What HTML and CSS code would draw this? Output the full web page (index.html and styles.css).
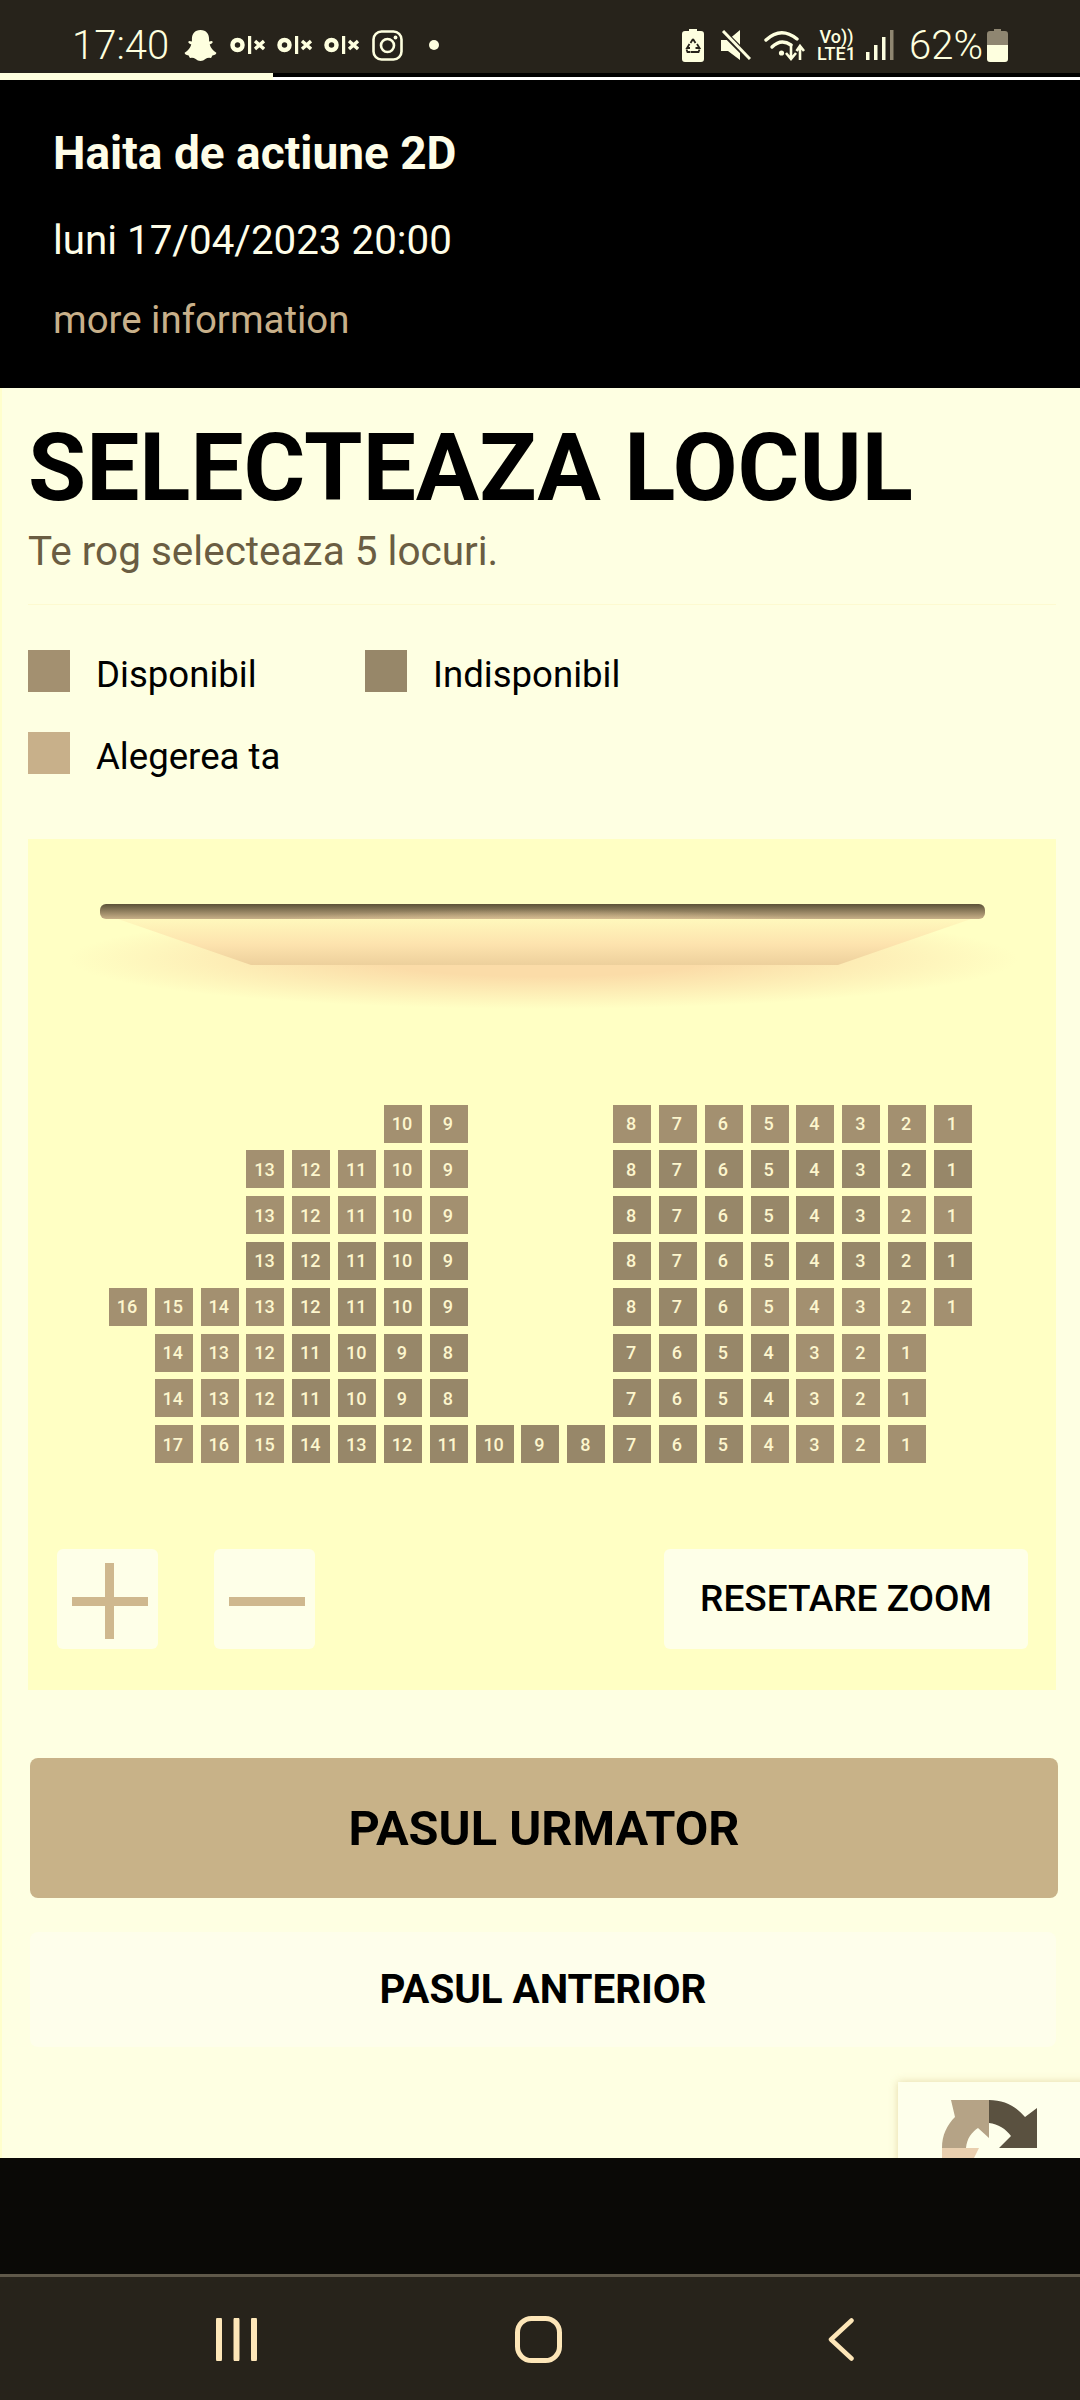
FILE: index.html
```html
<!DOCTYPE html>
<html lang="ro">
  <head>
    <meta charset="UTF-8" />
    <title>Selecteaza locul</title>
    <link rel="stylesheet" href="styles.css">
  </head>
  <body>
    <div class="status">
      <span class="time">17:40</span>
      <svg class="ic-snap" viewBox="0 0 100 100"><path d="M50 3C68 3 76 16 76 30L76 38 84 36Q90 38 84 44L78 47Q82 62 98 72 98 78 86 80L82 88Q72 86 66 90 58 97 50 97 42 97 34 90 28 86 18 88L14 80Q2 78 2 72 18 62 22 47L16 44Q10 38 16 36L24 38 24 30C24 16 32 3 50 3Z"/></svg>
      <svg class="ic-olx" viewBox="0 0 35 18"><circle cx="7.5" cy="9" r="5" fill="none" stroke="#feffdf" stroke-width="4.5"/><rect x="18" width="3.2" height="18"/><path d="M25 5l9 8M34 5l-9 8" stroke="#feffdf" stroke-width="3.4"/></svg>
      <svg class="ic-olx" viewBox="0 0 35 18"><circle cx="7.5" cy="9" r="5" fill="none" stroke="#feffdf" stroke-width="4.5"/><rect x="18" width="3.2" height="18"/><path d="M25 5l9 8M34 5l-9 8" stroke="#feffdf" stroke-width="3.4"/></svg>
      <svg class="ic-olx" viewBox="0 0 35 18"><circle cx="7.5" cy="9" r="5" fill="none" stroke="#feffdf" stroke-width="4.5"/><rect x="18" width="3.2" height="18"/><path d="M25 5l9 8M34 5l-9 8" stroke="#feffdf" stroke-width="3.4"/></svg>
      <svg class="ic-insta" viewBox="0 0 31 31"><rect x="1.5" y="1.5" width="28" height="28" rx="8" fill="none" stroke="#feffdf" stroke-width="2.6"/><circle cx="15.5" cy="15.5" r="6.5" fill="none" stroke="#feffdf" stroke-width="2.6"/><circle cx="23.5" cy="7.5" r="1.9"/></svg>
      <i class="dot"></i>
      <span class="status-space"></span>
      <svg class="ic-saver" viewBox="0 0 22 33"><path d="M7 0h8v2h4q3 0 3 3v25q0 3-3 3H3q-3 0-3-3V5q0-3 3-3h4z"/><path d="M11 10l-2.500 4M8 19H5l2.500-4M11 10l2.500 4M15 15l2.500 4h-4M8.500 23H5.500L4.500 20.500M13 23h3.500l1-2.500M9 23h4" fill="none" stroke="#27231b" stroke-width="1.8"/></svg>
      <svg class="ic-mute" viewBox="0 0 30 30"><path d="M0 10h7L19 0v30L7 21H0z"/><path d="M0 0l30 30" stroke="#27231b" stroke-width="6"/><path d="M2 1l27 28" stroke="#feffdf" stroke-width="3"/></svg>
      <svg class="ic-wifi" viewBox="0 0 42 33"><g fill="none" stroke="#feffdf" stroke-width="3.400" stroke-linecap="round"><path d="M2 11Q17-3 33 10"/><path d="M8 18Q17 9 27 16"/></g><circle cx="17.500" cy="24" r="2.600"/><path d="M27 15v14M22 24l5 6 5-6M36 31V18M32.500 22l3.500-5 4 5" fill="none" stroke="#feffdf" stroke-width="2.600"/></svg>
      <span class="volte"><b>Vo))</b><b>LTE1</b></span>
      <svg class="ic-signal" viewBox="0 0 28 30"><rect y="22" width="3.500" height="8"/><rect x="8" y="15" width="3.500" height="15"/><rect x="16" y="7" width="3.500" height="23"/><rect x="24" width="3.500" height="30" fill="#8f8671"/></svg>
      <span class="pct">62%</span>
      <svg class="ic-batt" viewBox="0 0 21 33"><path d="M7 0h7v2h4q3 0 3 3v11H0V5q0-3 3-3h4z" fill="#8f8671"/><path d="M0 16h21v14q0 3-3 3H3q-3 0-3-3z"/></svg>
    </div>
    <div class="tabs">
      <i class="tab on"></i><i class="tab"></i><i class="tab"></i><i class="tab"></i>
    </div>

    <header class="movie">
      <h2>Haita de actiune 2D</h2>
      <p class="date">luni 17/04/2023 20:00</p>
      <a class="more">more information</a>
    </header>

    <main class="page">
      <h1>SELECTEAZA LOCUL</h1>
      <p class="hint">Te rog selecteaza 5 locuri.</p>
      <hr class="rule" />
      <div class="legend">
        <div class="key"><i class="swatch"></i>Disponibil</div>
        <div class="key"><i class="swatch busy"></i>Indisponibil</div>
        <div class="key"><i class="swatch mine"></i>Alegerea ta</div>
      </div>

      <section class="hall">
        <div class="screen-bar"></div>
        <div class="screen-wrap">
          <div class="screen-glow"></div>
          <div class="screen"></div>
        </div>

        <div class="seats">
          <i></i><i></i><i></i><i></i><i></i><i></i>
          <b>10</b><b>9</b>
          <i></i><i></i><i></i>
          <b>8</b><b>7</b><b>6</b><b>5</b><b>4</b><b>3</b><b>2</b><b>1</b>

          <i></i><i></i><i></i>
          <b>13</b><b>12</b><b>11</b><b>10</b><b>9</b>
          <i></i><i></i><i></i>
          <b class="dk">8</b><b class="dk">7</b><b class="dk">6</b><b class="dk">5</b><b class="dk">4</b><b class="dk">3</b><b class="dk">2</b><b class="dk">1</b>

          <i></i><i></i><i></i>
          <b>13</b><b>12</b><b>11</b><b>10</b><b>9</b>
          <i></i><i></i><i></i>
          <b class="dk">8</b><b class="dk">7</b><b class="dk">6</b><b class="dk">5</b><b class="dk">4</b><b class="dk">3</b><b>2</b><b>1</b>

          <i></i><i></i><i></i>
          <b class="dk">13</b><b class="dk">12</b><b class="dk">11</b><b class="dk">10</b><b class="dk">9</b>
          <i></i><i></i><i></i>
          <b class="dk">8</b><b class="dk">7</b><b class="dk">6</b><b class="dk">5</b><b class="dk">4</b><b class="dk">3</b><b class="dk">2</b><b class="dk">1</b>

          <b>16</b><b>15</b><b>14</b><b>13</b><b class="dk">12</b><b class="dk">11</b><b class="dk">10</b><b class="dk">9</b>
          <i></i><i></i><i></i>
          <b class="dk">8</b><b class="dk">7</b><b class="dk">6</b><b>5</b><b>4</b><b>3</b><b>2</b><b>1</b>

          <i></i>
          <b>14</b><b>13</b><b>12</b><b class="dk">11</b><b class="dk">10</b><b class="dk">9</b><b class="dk">8</b>
          <i></i><i></i><i></i>
          <b class="dk">7</b><b class="dk">6</b><b class="dk">5</b><b class="dk">4</b><b>3</b><b>2</b><b>1</b>
          <i></i>

          <i></i>
          <b>14</b><b>13</b><b>12</b><b class="dk">11</b><b class="dk">10</b><b class="dk">9</b><b class="dk">8</b>
          <i></i><i></i><i></i>
          <b class="dk">7</b><b class="dk">6</b><b class="dk">5</b><b class="dk">4</b><b>3</b><b>2</b><b>1</b>
          <i></i>

          <i></i>
          <b>17</b><b>16</b><b>15</b><b class="dk">14</b><b class="dk">13</b><b class="dk">12</b><b class="dk">11</b><b class="dk">10</b><b class="dk">9</b><b class="dk">8</b>
          <b class="dk">7</b><b class="dk">6</b><b class="dk">5</b><b>4</b><b>3</b><b>2</b><b>1</b>
          <i></i>
        </div>

        <div class="zoom">
          <button class="zoom-btn plus"></button>
          <button class="zoom-btn minus"></button>
          <button class="zoom-reset">RESETARE ZOOM</button>
        </div>
      </section>

      <button class="next">PASUL URMATOR</button>
      <button class="prev">PASUL ANTERIOR</button>

      <div class="captcha">
        <svg viewBox="0 0 95 76">
          <path fill="#b5a386" d="M0 48C0 35 5 25 13 17L9 0 47 0 47 38 36 28C30 32 25 38 24 48Z"/>
          <path fill="#5a5140" d="M47 0C62 0 74 6 83 17L95 8 95 48 57 48 69 36C64 29 56 24 47 23Z"/>
          <path fill="#e9cfae" d="M0 48 37 48 30 62 0 62Z"/>
        </svg>
      </div>
    </main>

    <div class="blackout"></div>

    <nav class="nav">
      <svg class="nav-recent" viewBox="0 0 41 43"><path d="M3 2v39M20.500 2v39M38 2v39" fill="none" stroke="#fde6b8" stroke-width="6" stroke-linecap="round"/></svg>
      <svg class="nav-home" viewBox="0 0 47 47"><rect x="2.500" y="2.500" width="42" height="42" rx="14" fill="none" stroke="#fde6b8" stroke-width="5"/></svg>
      <svg class="nav-back" viewBox="0 0 26 43"><path d="M23.500 2.500L3 21.500 23.500 40.500" fill="none" stroke="#fde6b8" stroke-width="4.500" stroke-linecap="round" stroke-linejoin="round"/></svg>
    </nav>
  </body>
</html>
```

FILE: styles.css
```css
* {
  margin: 0;
  padding: 0;
  box-sizing: border-box;
  font-family: "Roboto", sans-serif;
}
body {
  width: 1080px;
  height: 2400px;
  overflow: hidden;
  display: flex;
  flex-direction: column;
  background: #000;
}

/* phone status bar */
.status {
  height: 73px;
  padding: 17px 72px 0 72px;
  background: #27231b;
  color: #feffdf;
  display: flex;
  align-items: center;
}
.status svg {
  fill: #feffdf;
  flex: none;
}
.time {
  width: 96px;
  font-size: 40px;
  font-weight: 300;
}
.ic-snap {
  width: 35px;
  height: 33px;
  margin-left: 15px;
}
.ic-olx {
  width: 35px;
  height: 18px;
  margin-left: 12px;
}
.ic-insta {
  width: 31px;
  height: 31px;
  margin-left: 13px;
}
.dot {
  width: 10px;
  height: 10px;
  border-radius: 50%;
  background: #feffdf;
  margin-left: 26px;
}
.status-space {
  flex: 1;
}
.ic-saver {
  width: 22px;
  height: 33px;
}
.ic-mute {
  width: 30px;
  height: 30px;
  margin-left: 17px;
}
.ic-wifi {
  width: 42px;
  height: 33px;
  margin-left: 13px;
}
.volte {
  display: flex;
  flex-direction: column;
  align-items: center;
  width: 39px;
  margin-left: 11px;
  font-size: 18px;
  line-height: 17px;
}
.volte b {
  font-weight: 500;
}
.ic-signal {
  width: 28px;
  height: 30px;
  margin-left: 10px;
}
.pct {
  width: 72px;
  margin-left: 15px;
  font-size: 40px;
  font-weight: 300;
}
.ic-batt {
  width: 21px;
  height: 33px;
  margin-left: 6px;
}

.tabs {
  height: 7px;
  display: flex;
  gap: 3px;
  background: #000;
  border-bottom: 3px solid #fff;
}
.tab {
  flex: 1;
}
.tab.on {
  flex: none;
  width: 273px;
  height: 7px;
  background: #feffdf;
}

/* movie header */
.movie {
  height: 308px;
  padding: 41px 0 0 53px;
  background: #000;
}
.movie h2 {
  font-size: 46px;
  line-height: 64px;
  font-weight: 700;
  color: #fefde8;
}
.date {
  margin-top: 33px;
  font-size: 40.3px;
  line-height: 46px;
  color: #fefde8;
}
.more {
  display: block;
  margin-top: 33px;
  font-size: 38.4px;
  line-height: 46px;
  color: #c8b08a;
}

/* main page */
.page {
  position: relative;
  height: 1770px;
  padding: 28px 24px 0 26px;
  overflow: hidden;
  background: #feffe2;
  border-left: 2px solid #ffffcc;
}
h1 {
  font-size: 94.5px;
  line-height: 104px;
  font-weight: 700;
  color: #000;
  white-space: nowrap;
}
.hint {
  margin-top: 8px;
  font-size: 40.5px;
  line-height: 46px;
  color: #6a5d42;
}
.rule {
  margin-top: 30px;
  height: 1px;
  border: 0;
  background: #fdfad0;
}
.legend {
  margin-top: 45px;
  display: grid;
  grid-template-columns: 337px 1fr;
  grid-auto-rows: 82px;
}
.key {
  display: flex;
  align-items: flex-start;
  font-size: 36.6px;
  line-height: 50px;
  color: #000;
}
.swatch {
  width: 42px;
  height: 42px;
  margin-right: 26px;
  background: #a39070;
}
.swatch.busy {
  background: #978769;
}
.swatch.mine {
  background: #c8b08a;
}

/* seat map */
.hall {
  margin-top: 25px;
  width: 1028px;
  height: 851px;
  padding: 65px 0 0;
  background: #ffffc4;
}
.screen-bar {
  width: 885px;
  height: 15px;
  margin-left: 72px;
  border-radius: 6px;
  background: linear-gradient(#5c5238, #c8b088);
}
.screen-wrap {
  position: relative;
  height: 46px;
}
.screen {
  position: absolute;
  left: 90px;
  top: 0;
  width: 853px;
  height: 46px;
  clip-path: polygon(0 0, 100% 0, 84.4% 100%, 15.6% 100%);
  background: linear-gradient(#fff8bc, #fde3ae 55%, #edd09c);
}
.screen-glow {
  position: absolute;
  left: 40px;
  top: -10px;
  width: 950px;
  height: 100px;
  background: radial-gradient(closest-side, #fbdca8 35%, rgba(255, 255, 196, 0));
}
.seats {
  margin: 139.5px 0 0 81px;
  display: grid;
  grid-template-columns: repeat(19, 38px);
  grid-auto-rows: 38px;
  gap: 7.83px;
}
.seats b {
  display: flex;
  align-items: center;
  justify-content: center;
  padding-right: 2px;
  background: #a39070;
  color: #fdf6cd;
  font-size: 18px;
  font-weight: 500;
}
.seats b.dk {
  background: #978769;
}
.zoom {
  margin-top: 85.5px;
  padding: 0 28px 0 29px;
  display: flex;
  align-items: center;
}
.zoom button {
  height: 100px;
  border: 0;
  border-radius: 6px;
  background: #feffe8;
}
.zoom-btn {
  position: relative;
  width: 101px;
  margin-right: 56px;
}
.zoom-btn::before {
  content: "";
  position: absolute;
  left: 15px;
  top: 48px;
  width: 76px;
  height: 9px;
  background: #cfb88e;
}
.plus::after {
  content: "";
  position: absolute;
  left: 48px;
  top: 14px;
  width: 9px;
  height: 76px;
  background: #cfb88e;
}
.zoom-reset {
  width: 364px;
  margin-left: auto;
  font-size: 37px;
  font-weight: 500;
  color: #000;
}

.next,
.prev {
  display: block;
  border: 0;
  color: #000;
  font-weight: 700;
}
.next {
  width: 1028px;
  height: 140px;
  margin: 68px 0 0 2px;
  border-radius: 8px;
  background: #c8b288;
  font-size: 48.7px;
}
.prev {
  width: 1026px;
  height: 115px;
  margin: 34px 0 0 2px;
  border-radius: 8px;
  background: #fefeeb;
  font-size: 40.3px;
}

/* recaptcha badge sticking out behind the keyboard area */
.captcha {
  position: absolute;
  left: 896px;
  top: 1694px;
  width: 190px;
  height: 150px;
  padding: 18px 0 0 44px;
  background: #feffeb;
  box-shadow: 0 0 8px rgba(200, 170, 100, 0.45);
}
.captcha svg {
  display: block;
  width: 95px;
  height: 76px;
}

.blackout {
  height: 116px;
  background: #0a0906;
}
.nav {
  height: 126px;
  padding: 41px 0 0 85.5px;
  background: #27231b;
  border-top: 3px solid #5f5849;
  display: grid;
  grid-template-columns: repeat(3, 302px);
  justify-items: center;
  align-items: start;
}
.nav-recent {
  width: 41px;
  height: 43px;
}
.nav-home {
  width: 47px;
  height: 47px;
  margin-top: -2px;
}
.nav-back {
  width: 26px;
  height: 43px;
}
```
